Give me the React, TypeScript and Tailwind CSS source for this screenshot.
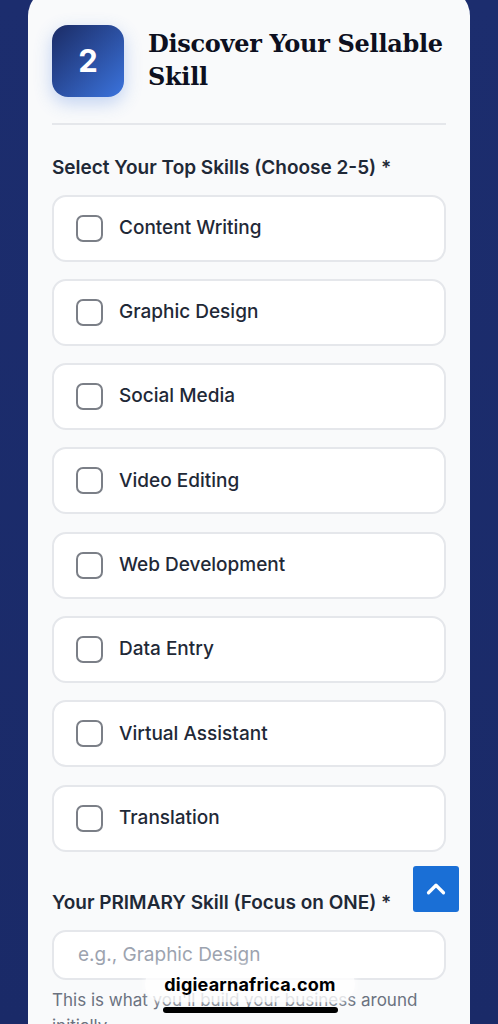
import { ChevronUp } from "lucide-react";

const skills = [
  "Content Writing",
  "Graphic Design",
  "Social Media",
  "Video Editing",
  "Web Development",
  "Data Entry",
  "Virtual Assistant",
  "Translation",
];

function SkillOption({ label }: { label: string }) {
  return (
    <label className="flex h-[67px] items-center gap-4 rounded-[14px] border-2 border-[#e5e7eb] bg-white px-[22px]">
      <span className="h-[27px] w-[27px] shrink-0 rounded-[7px] border-2 border-[#7b7f87] bg-white" />
      <span className="text-[19px] font-medium text-[#1f2937]">{label}</span>
    </label>
  );
}

export default function App() {
  return (
    <div className="relative h-[1024px] overflow-hidden bg-gradient-to-b from-[#1c2d6e] to-[#1a2a68] font-['Inter',sans-serif]">
      <div className="mx-[28px] -mt-[12px] h-[1060px] rounded-t-[28px] bg-[#f9fafb] px-[24px] pt-[37px]">
        <div className="flex items-start gap-6 border-b-2 border-[#e5e7eb] pb-[26px]">
          <div className="flex h-[72px] w-[72px] shrink-0 items-center justify-center rounded-[16px] bg-gradient-to-br from-[#1b2c66] to-[#3b74de] shadow-[0_6px_18px_rgba(59,116,222,0.3)]">
            <span className="text-[31px] font-bold text-white">2</span>
          </div>
          <h2 className="pt-[2px] font-['DejaVu_Serif',serif] text-[24px] font-bold leading-[33px] tracking-[-0.3px] text-[#0d1020]">
            Discover Your Sellable Skill
          </h2>
        </div>

        <p className="mt-[29px] text-[19px] font-semibold text-[#1f2937]">
          Select Your Top Skills (Choose 2-5) *
        </p>
        <div className="mt-[12px] flex flex-col gap-[17.3px]">
          {skills.map((s) => (
            <SkillOption key={s} label={s} />
          ))}
        </div>

        <p className="mt-[37px] text-[19px] font-semibold text-[#1f2937]">
          Your PRIMARY Skill (Focus on ONE) *
        </p>
        <div className="mt-[13px] flex h-[50px] items-center rounded-[14px] border-2 border-[#e5e7eb] bg-white px-[24px]">
          <span className="text-[19px] text-[#9ca3af]">e.g., Graphic Design</span>
        </div>
        <p className="mt-[7px] text-[17px] leading-[26px] text-[#6b7280]">
          This is what you'll build your business around initially.
        </p>
      </div>

      <button className="absolute left-[413px] top-[866px] flex h-[46px] w-[46px] items-center justify-center rounded-[3px] bg-[#1a6fd6] text-white">
        <ChevronUp size={30} strokeWidth={2.6} />
      </button>

      <div className="absolute left-[145px] top-[966px] flex h-[36px] w-[210px] items-start justify-center rounded-full bg-white/80 pt-[5px] shadow-[0_0_8px_rgba(255,255,255,0.8)]">
        <span className="text-[18px] font-bold tracking-[0.2px] text-black">digiearnafrica.com</span>
      </div>
      <div className="absolute left-[163px] top-[1007px] h-[6px] w-[175px] rounded-full bg-black" />
    </div>
  );
}
